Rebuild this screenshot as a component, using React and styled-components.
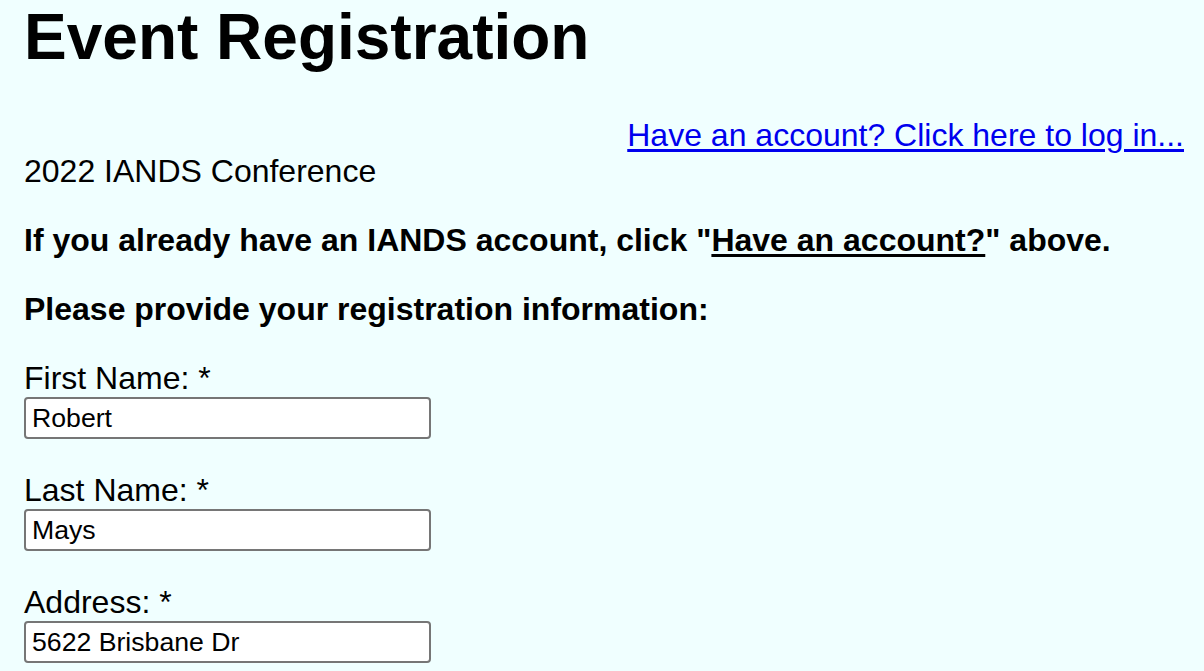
import React from "react";
import styled, { createGlobalStyle } from "styled-components";

const GlobalStyle = createGlobalStyle`
  html, body {
    margin: 0;
    padding: 0;
    background: #f0ffff;
  }
  body {
    font-family: "Liberation Sans", Arial, sans-serif;
    color: #000;
  }
`;

const Page = styled.main`
  padding: 0 20px 0 24px;
  font-size: 32px;
  line-height: 37px;
`;

const Title = styled.h1`
  margin: 0 0 43px;
  font-size: 64px;
  line-height: 74px;
  font-weight: bold;
`;

const LoginRow = styled.div`
  text-align: right;
`;

const LoginLink = styled.a`
  color: #0000ee;
  text-decoration: underline;
  text-underline-offset: 3px;
`;

const EventName = styled.div`
  margin-top: -1px;
`;

const Notice = styled.p`
  margin: 32px 0 0;
  font-weight: bold;
`;

const Underlined = styled.span`
  text-decoration: underline;
  text-underline-offset: 3px;
`;

const Form = styled.form`
  display: flex;
  flex-direction: column;
  gap: 33px;
  margin-top: 32px;
`;

const Field = styled.div`
  display: flex;
  flex-direction: column;
  align-items: flex-start;
`;

const Label = styled.label`
  font-size: 32px;
  line-height: 37px;
`;

const TextInput = styled.input`
  box-sizing: border-box;
  width: 407px;
  height: 42px;
  margin: 0;
  padding: 0 6px;
  border: 2px solid #767676;
  border-radius: 4px;
  background: #fff;
  font-family: "Liberation Sans", Arial, sans-serif;
  font-size: 26.67px;
  color: #000;
  outline: none;
`;

const fields = [
  { id: "first", label: "First Name: *", value: "Robert" },
  { id: "last", label: "Last Name: *", value: "Mays" },
  { id: "address", label: "Address: *", value: "5622 Brisbane Dr" },
];

export default function App() {
  return (
    <>
      <GlobalStyle />
      <Page>
        <Title>Event Registration</Title>
        <LoginRow>
          <LoginLink href="#login">Have an account? Click here to log in...</LoginLink>
        </LoginRow>
        <EventName>2022 IANDS Conference</EventName>
        <Notice>
          If you already have an IANDS account, click "<Underlined>Have an account?</Underlined>" above.
        </Notice>
        <Notice>Please provide your registration information:</Notice>
        <Form onSubmit={(e) => e.preventDefault()}>
          {fields.map((f) => (
            <Field key={f.id}>
              <Label htmlFor={f.id}>{f.label}</Label>
              <TextInput id={f.id} type="text" defaultValue={f.value} />
            </Field>
          ))}
        </Form>
      </Page>
    </>
  );
}
